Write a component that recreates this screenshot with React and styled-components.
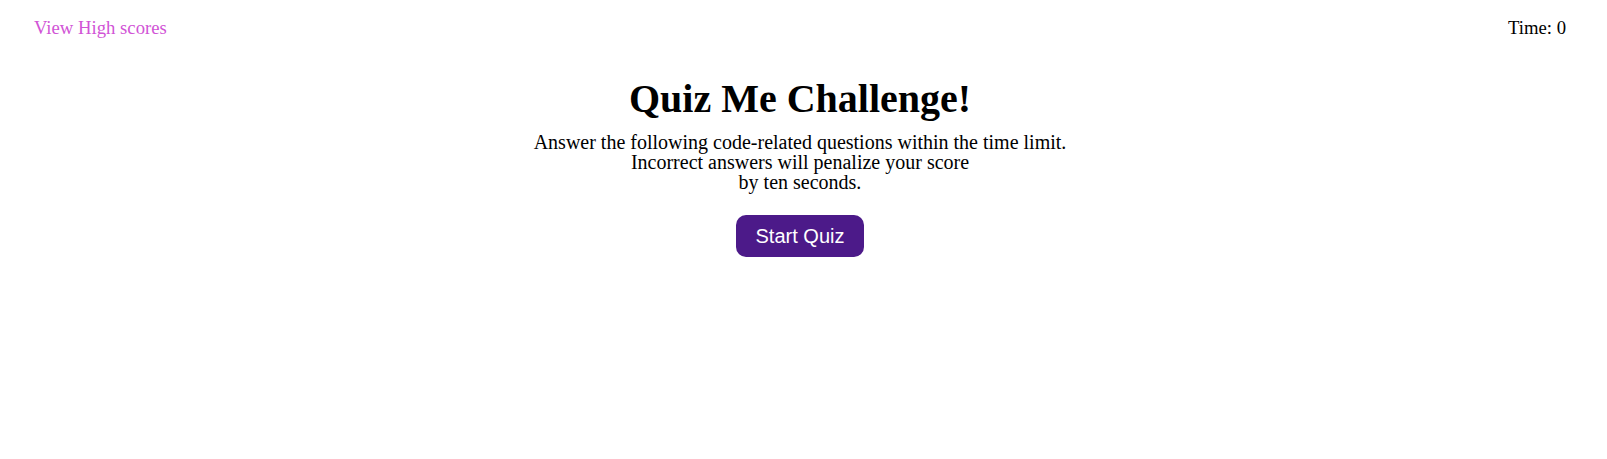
import React from 'react'
import styled, { createGlobalStyle } from 'styled-components'

const GlobalStyle = createGlobalStyle`
    body {
        margin: 0;
        background: #ffffff;
        font-family: "Liberation Serif", "Times New Roman", serif;
        color: #000000;
    }
`

const Header = styled.header`
    display: flex;
    justify-content: space-between;
    align-items: center;
    padding: 17px 41px 0 34px;
    font-size: 18.7px;
`

const HighScores = styled.a`
    color: ${props => props.color || "#d154d6"};
    text-decoration: none;
    cursor: pointer;
`

const Timer = styled.div`
    color: #000000;
`

const Main = styled.main`
    display: flex;
    flex-direction: column;
    align-items: center;
    text-align: center;
    margin-top: 37px;
    padding-right: 7px;
`

const Title = styled.h1`
    margin: 0;
    font-size: 40px;
    font-weight: bold;
    line-height: 46px;
`

const Intro = styled.p`
    margin: 10px 0 0;
    font-size: 20px;
    line-height: 20px;
`

const StartButton = styled.button`
    margin-top: 23px;
    width: 128px;
    height: 42px;
    border: none;
    border-radius: 10px;
    background-color: ${props => props.bg || "#4c1a89"};
    color: #ffffff;
    font-family: "Liberation Sans", Arial, sans-serif;
    font-size: 20px;
    cursor: pointer;
`

export default function App() {
    return (
        <>
            <GlobalStyle />
            <Header>
                <HighScores>View High scores</HighScores>
                <Timer>Time: 0</Timer>
            </Header>
            <Main>
                <Title>Quiz Me Challenge!</Title>
                <Intro>
                    Answer the following code-related questions within the time limit.<br />
                    Incorrect answers will penalize your score<br />
                    by ten seconds.
                </Intro>
                <StartButton>Start Quiz</StartButton>
            </Main>
        </>
    )
}
